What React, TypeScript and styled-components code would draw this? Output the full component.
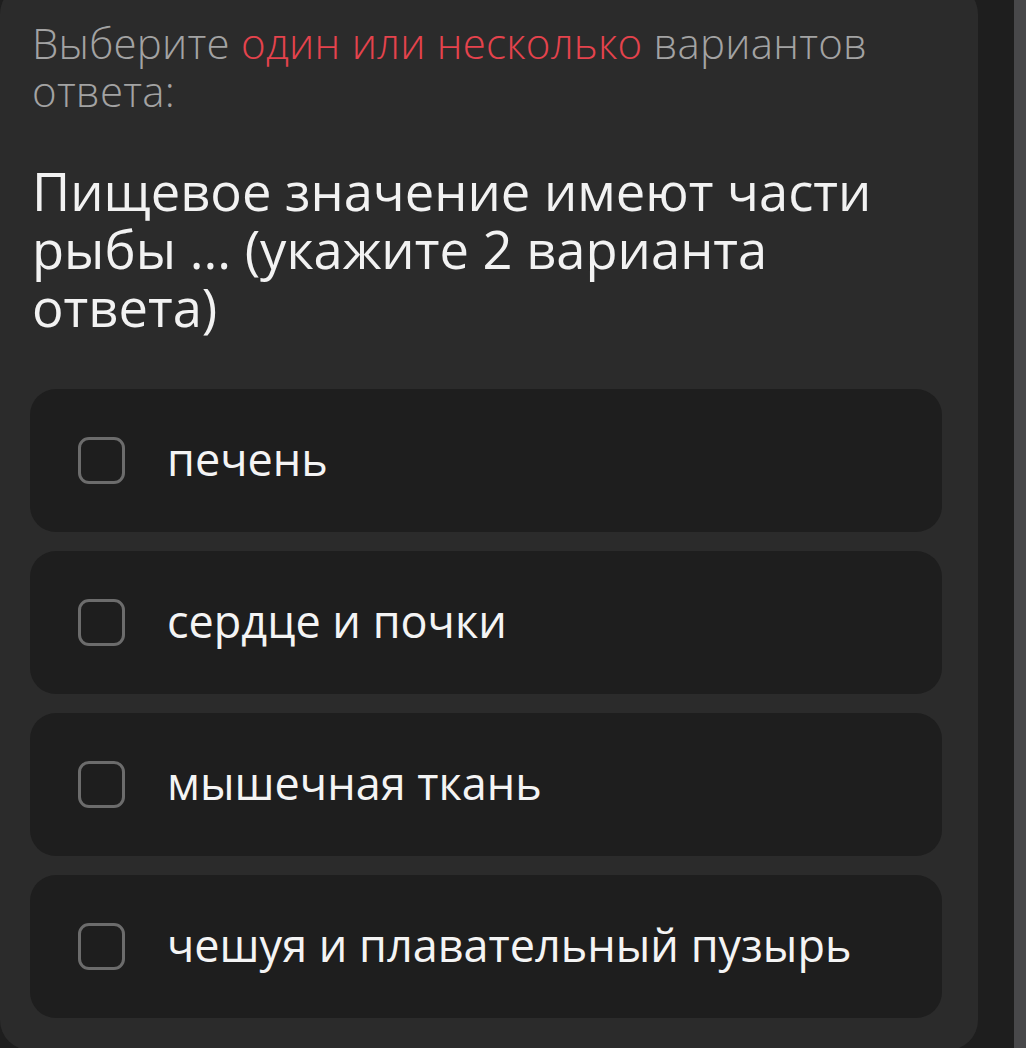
import React from "react";
import styled, { createGlobalStyle } from "styled-components";

const Global = createGlobalStyle`
  html, body { margin: 0; padding: 0; background: #1e1e1e; }
  body { font-family: "Open Sans", "Liberation Sans", sans-serif; overflow: hidden; }
`;

const Page = styled.div`
  display: flex;
  height: 1048px;
  overflow: hidden;
  background: #1e1e1e;
`;

const Card = styled.section`
  width: 978px;
  flex: none;
  box-sizing: border-box;
  margin-top: -16px;
  height: 1066px;
  background: #2b2b2b;
  border-radius: 30px;
  padding: 35px 36px 0 32px;
  display: flex;
  flex-direction: column;
`;

const Gutter = styled.div`
  flex: 1;
`;

const Scrollbar = styled.div`
  width: 12px;
  flex: none;
  background: #48484a;
`;

const Intro = styled.p`
  margin: 0;
  max-width: 880px;
  font-size: 42px;
  line-height: 48px;
  letter-spacing: 0.25px;
  font-weight: 300;
  color: #a3a3a3;
`;

const Accent = styled.span`
  color: #e5434d;
`;

const Question = styled.h1`
  margin: 47px 0 0;
  max-width: 890px;
  font-size: 52.5px;
  line-height: 58px;
  font-weight: 500;
  color: #f2f2f2;
`;

const Options = styled.div`
  margin-top: 53px;
  margin-left: -2px;
  display: flex;
  flex-direction: column;
  gap: 19px;
`;

const Option = styled.label`
  display: flex;
  align-items: center;
  gap: 42px;
  height: 143px;
  box-sizing: border-box;
  padding-left: 48px;
  background: #1e1e1e;
  border-radius: 26px;
  cursor: pointer;
`;

const Box = styled.span`
  width: 47px;
  height: 47px;
  flex: none;
  box-sizing: border-box;
  border: 3.5px solid #6c6c6c;
  border-radius: 11px;
`;

const OptionText = styled.span`
  font-size: 45px;
  font-weight: 400;
  color: #f4f4f4;
  line-height: 1;
  padding-bottom: 4px;
`;

const answers = ["печень", "сердце и почки", "мышечная ткань", "чешуя и плавательный пузырь"];

export default function App() {
  return (
    <>
      <Global />
      <Page>
        <Card>
          <Intro>
            Выберите <Accent>один или несколько</Accent> вариантов
            <br />
            ответа:
          </Intro>
          <Question>Пищевое значение имеют части рыбы ... (укажите 2 варианта ответа)</Question>
          <Options>
            {answers.map((a) => (
              <Option key={a}>
                <Box />
                <OptionText>{a}</OptionText>
              </Option>
            ))}
          </Options>
        </Card>
        <Gutter />
        <Scrollbar />
      </Page>
    </>
  );
}
